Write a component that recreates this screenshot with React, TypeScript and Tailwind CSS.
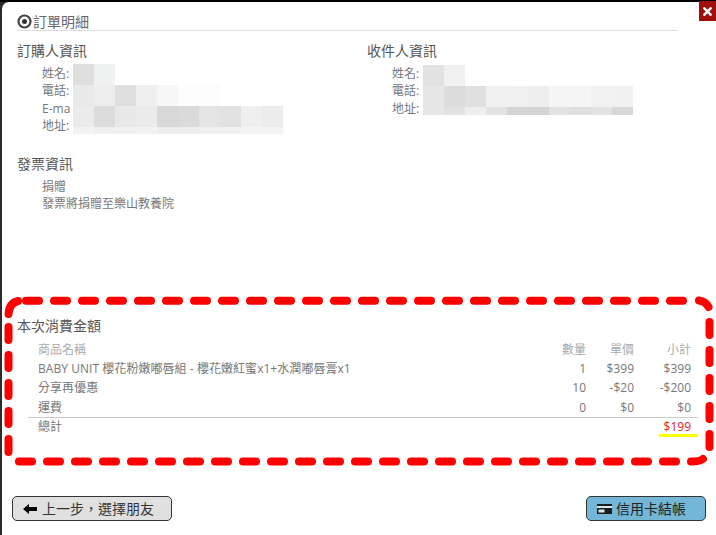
import React from 'react';
import { FaTimes } from 'react-icons/fa';

const font = "font-['Open_Sans','Noto_Sans_CJK_TC',sans-serif]";

// pixelated blocks hiding the personal data
function Mosaic({ className, rows, lastHeight }: { className: string; rows: string[][]; lastHeight: string }) {
  return (
    <div className={`absolute flex flex-col ${className}`}>
      {rows.map((row, i) => (
        <div key={i} className={`flex ${i === rows.length - 1 ? lastHeight : 'h-[21px]'}`}>
          {row.map((c, j) => (
            <div key={j} className={`w-[21px] ${c}`} />
          ))}
        </div>
      ))}
    </div>
  );
}

const buyerRows = [
  ['bg-[#dedede]', 'bg-[#f0f1f1]'],
  ['bg-[#e9e9e9]', 'bg-[#ededed]', 'bg-[#dfdfdf]', 'bg-[#efefef]', 'bg-[#f7f7f7]', 'bg-[#fdfdfd]', 'bg-[#fcfcfc]'],
  ['bg-[#ebebeb]', 'bg-[#dcdcdc]', 'bg-[#e8e8e8]', 'bg-[#ebebeb]', 'bg-[#d8d8d8]', 'bg-[#dadada]', 'bg-[#e4e4e4]', 'bg-[#e2e2e2]', 'bg-[#efefef]', 'bg-[#ececec]'],
  ['bg-[#f2f2f2]', 'bg-[#efefef]', 'bg-[#f0f0f0]', 'bg-[#f2f2f2]', 'bg-[#ededed]', 'bg-[#eeeeee]', 'bg-[#f0f0f0]', 'bg-[#f0f0f0]', 'bg-[#f4f4f4]', 'bg-[#f3f3f3]'],
];

const receiverRows = [
  ['bg-[#e2e2e2]', 'bg-[#f1f1f1]'],
  ['bg-[#e6e6e6]', 'bg-[#dcdcdc]', 'bg-[#e0e0e0]', 'bg-[#f1f1f1]', 'bg-[#f0f0f0]', 'bg-[#eeeeee]', 'bg-[#f5f5f5]', 'bg-[#f5f5f5]', 'bg-[#f2f2f2]', 'bg-[#f1f1f1]'],
  ['bg-[#e6e6e6]', 'bg-[#e2e2e2]', 'bg-[#eeeeee]', 'bg-[#e2e2e2]', 'bg-[#d4d4d4]', 'bg-[#d4d4d4]', 'bg-[#e2e2e2]', 'bg-[#dfdfdf]', 'bg-[#e2e2e2]', 'bg-[#d8d8d8]'],
];

const items = [
  ['BABY UNIT 櫻花粉嫩嘟唇組 - 櫻花嫩紅蜜x1+水潤嘟唇膏x1', '1', '$399', '$399', 'h-[19px]'],
  ['分享再優惠', '10', '-$20', '-$200', 'h-[19px]'],
  ['運費', '0', '$0', '$0', 'h-[20px]'],
];

function InfoBlock({ title, lines, className, gap }: { title: string; lines: string[]; className: string; gap: string }) {
  return (
    <div className={className}>
      <h3 className="text-[14px] leading-[20px] text-[#555]">{title}</h3>
      <div className={`${gap} pl-[25px] text-[12px] leading-[17.3px] text-[#777]`}>
        {lines.map((l) => (
          <div key={l}>{l}</div>
        ))}
      </div>
    </div>
  );
}

function Annotation() {
  return (
    <svg className="pointer-events-none absolute left-0 top-0" width="716" height="535" fill="none" stroke="#ff0000" strokeWidth="8" strokeLinecap="round">
      <path d="M26 300.8H686" strokeDasharray="13 15" />
      <path d="M8.5 314C9 307 12 302.500 18 301" />
      <path d="M699 300.500C703 301 706.500 303 708.500 307" />
      <path d="M8.500 327V452" strokeDasharray="13 15" />
      <path d="M709.500 322V447" strokeDasharray="13 15" />
      <path d="M19 461.500H680" strokeDasharray="13 15" />
      <path d="M691 461.500C697 461.500 701 461 703 459" />
    </svg>
  );
}

export default function App() {
  return (
    <div className={`relative h-[535px] w-[716px] overflow-hidden bg-[#2b2b2b] ${font}`}>
      <div className="h-[2px] bg-black" />
      <div className="ml-[2px] flex h-[533px] flex-col rounded-tl-[7px] bg-white pl-[15px] pr-[10px]">
        <div className="mr-[28px] mt-[11px] flex h-[18px] items-center border-b border-[#dddddd] pb-[1px] text-[14px] text-[#666]">
          <svg className="mr-[1px] shrink-0" width="15" height="15" viewBox="0 0 15 15">
            <circle cx="7.500" cy="7.500" r="6" fill="none" stroke="#444" strokeWidth="2.200" />
            <circle cx="7.500" cy="7.500" r="2.500" fill="#333" />
          </svg>
          <span>訂單明細</span>
        </div>

        <div className="mt-[10px] flex">
          <InfoBlock className="w-[350px]" gap="mt-[4px]" title="訂購人資訊" lines={['姓名:', '電話:', 'E-ma', '地址:']} />
          <InfoBlock className="" gap="mt-[4px]" title="收件人資訊" lines={['姓名:', '電話:', '地址:']} />
        </div>

        <div className="mt-[20px]">
          <InfoBlock className="" gap="mt-[4px]" title="發票資訊" lines={['捐贈', '發票將捐贈至樂山教養院']} />
        </div>

        <div className="mt-[103px]">
          <h3 className="text-[14px] leading-[20px] text-[#555]">本次消費金額</h3>
          <table className="ml-[11px] mt-[5px] w-[670px] table-fixed text-[12px] text-[#777]">
            <thead>
              <tr className="h-[19px] text-[#aaa]">
                <th className="pl-[10px] text-left font-normal">商品名稱</th>
                <th className="w-[50px] text-right font-normal">數量</th>
                <th className="w-[48px] text-right font-normal">單價</th>
                <th className="w-[64px] pr-[7px] text-right font-normal">小計</th>
              </tr>
            </thead>
            <tbody>
              {items.map(([name, qty, price, total, rowHeight]) => (
                <tr key={name} className={rowHeight}>
                  <td className="whitespace-nowrap pl-[10px] tracking-[0.05px]">{name}</td>
                  <td className="text-right">{qty}</td>
                  <td className="text-right">{price}</td>
                  <td className="pr-[7px] text-right">{total}</td>
                </tr>
              ))}
              <tr className="h-[18px] border-t border-[#cccccc]">
                <td className="pl-[10px]">總計</td>
                <td />
                <td />
                <td className="pr-[7px] text-right">
                  <span className="relative text-[#d9232e]">
                    $199
                    <span className="absolute -left-[5px] -right-[7px] top-[16px] h-[3px] bg-[#ffff00]" />
                  </span>
                </td>
              </tr>
            </tbody>
          </table>
        </div>

        <div className="mb-[14px] mt-auto flex justify-between">
          <button className="-ml-[5px] flex h-[25px] w-[160px] items-center rounded-[5px] border border-[#333] bg-[#e0e0e0] pl-[10px] text-[14px] text-[#333]">
            <svg className="mr-[5px] shrink-0" width="14" height="10" viewBox="0 0 14 10">
              <path d="M0 5L6 0V3H14V7H6V10Z" fill="#000" />
            </svg>
            上一步，選擇朋友
          </button>
          <button className="flex h-[25px] w-[120px] items-center rounded-[5px] border border-[#333] bg-[#74b6d6] pl-[10px] text-[14px] text-[#222]">
            <svg className="mr-[4px] shrink-0" width="15" height="10" viewBox="0 0 15 10">
              <rect width="15" height="10" fill="#1c1c1c" />
              <rect y="2" width="15" height="2" fill="#d8e6ec" />
              <rect x="1.500" y="5.500" width="6" height="3" fill="#d8e6ec" />
            </svg>
            信用卡結帳
          </button>
        </div>
      </div>

      <Mosaic className="left-[73px] top-[64px]" rows={buyerRows} lastHeight="h-[7px]" />
      <Mosaic className="left-[423px] top-[65px]" rows={receiverRows} lastHeight="h-[8px]" />

      <button className="absolute right-0 top-[1px] flex h-[20px] w-[17px] items-center justify-center bg-[#a00d0d] text-white">
        <FaTimes className="h-[13px] w-[13px]" />
      </button>
      <Annotation />
    </div>
  );
}
